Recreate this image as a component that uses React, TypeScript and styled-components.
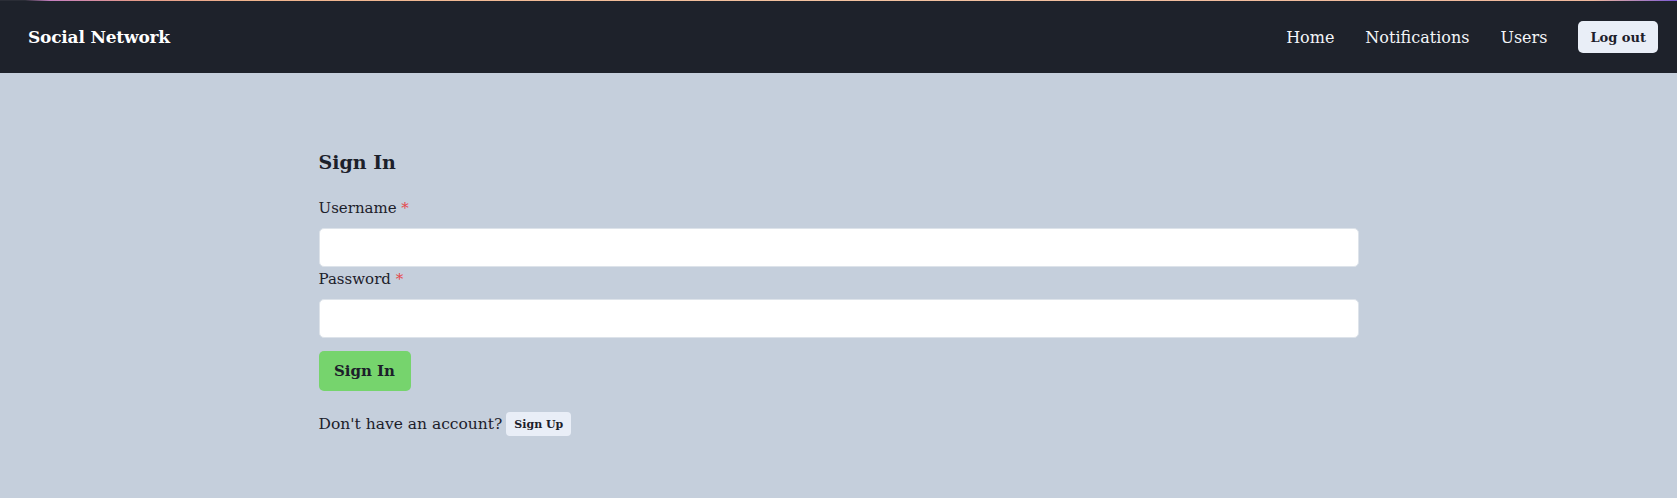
import React, { useState } from 'react'
import styled, { createGlobalStyle } from 'styled-components'

const GlobalStyle = createGlobalStyle`
	* {
		box-sizing: border-box;
	}
	html, body {
		margin: 0;
		padding: 0;
		background-color: #c5cfdc;
		font-family: 'DejaVu Serif', 'Liberation Serif', serif;
		color: #1c202a;
	}
`

const TopLine = styled.div`
	height: 1px;
	background: linear-gradient(
		to right,
		#2a2d36 0%,
		#2a2d36 1.5%,
		#c67fc0 3%,
		#e59a8a 8%,
		#f0b48d 15%,
		#f3c2a0 50%,
		#f0b89c 95%,
		#7b5ad6 100%
	);
`

const Nav = styled.nav`
	height: 72px;
	background-color: #1e222b;
	display: flex;
	align-items: center;
	justify-content: space-between;
	padding: 0 19px 0 28px;
`

const Brand = styled.h1`
	margin: 0;
	font-size: 17px;
	font-weight: bold;
	color: #ffffff;
	letter-spacing: -0.2px;
`

const NavLinks = styled.div`
	display: flex;
	align-items: center;
	gap: 31px;
`

const NavLink = styled.a`
	color: #f3f5f8;
	font-size: 16px;
	text-decoration: none;
	cursor: pointer;
`

const LightButton = styled.button<{ $small?: boolean }>`
	border: none;
	border-radius: ${p => (p.$small ? '4px' : '5px')};
	background-color: #e9eef7;
	color: #1c202a;
	font-family: inherit;
	font-weight: bold;
	font-size: ${p => (p.$small ? '11px' : '13px')};
	height: ${p => (p.$small ? '24px' : '32px')};
	padding: ${p => (p.$small ? '0 8px' : '0 12px')};
	cursor: pointer;
`

const Main = styled.main`
	width: 1040px;
	margin: 0 auto;
	padding-top: 76px;
	padding-bottom: 60px;
`

const Heading = styled.h2`
	margin: 0 0 21px;
	font-size: 19px;
	line-height: 26px;
	font-weight: bold;
`

const Form = styled.form`
	display: flex;
	flex-direction: column;
`

const Label = styled.label`
	display: block;
	font-size: 15px;
	line-height: 24px;
	margin-bottom: 8px;
`

const Required = styled.span`
	color: #e5484d;
`

const Input = styled.input`
	width: 100%;
	height: 39px;
	border: 1px solid #dde3ea;
	border-radius: 5px;
	background: #ffffff;
	padding: 0 10px;
	font-family: inherit;
	font-size: 15px;
	outline: none;
`

const Submit = styled.button.attrs({
	type: 'submit',
})`
	align-self: flex-start;
	margin-top: 13px;
	width: 92px;
	height: 40px;
	border: none;
	border-radius: 5px;
	background-color: #76d46d;
	color: #1c202a;
	font-family: inherit;
	font-weight: bold;
	font-size: 15px;
	cursor: pointer;
`

const Footer = styled.div`
	display: flex;
	align-items: center;
	gap: 4px;
	margin-top: 21px;
	font-size: 15.5px;
`

const App: React.FC = () => {
	const [inputs, setInputs] = useState({ username: '', password: '' })

	const submitHandler: React.FormEventHandler = event => {
		event.preventDefault()
	}

	return (
		<>
			<GlobalStyle />
			<TopLine />
			<Nav>
				<Brand>Social Network</Brand>
				<NavLinks>
					<NavLink>Home</NavLink>
					<NavLink>Notifications</NavLink>
					<NavLink>Users</NavLink>
					<LightButton>Log out</LightButton>
				</NavLinks>
			</Nav>
			<Main>
				<Heading>Sign In</Heading>
				<Form onSubmit={submitHandler}>
					<Label htmlFor="username">
						Username <Required>*</Required>
					</Label>
					<Input
						id="username"
						value={inputs.username}
						onChange={e => setInputs(prev => ({ ...prev, username: e.target.value }))}
					/>
					<Label htmlFor="password">
						Password <Required>*</Required>
					</Label>
					<Input
						id="password"
						type="password"
						value={inputs.password}
						onChange={e => setInputs(prev => ({ ...prev, password: e.target.value }))}
					/>
					<Submit>Sign In</Submit>
				</Form>
				<Footer>
					Don't have an account? <LightButton $small>Sign Up</LightButton>
				</Footer>
			</Main>
		</>
	)
}

export default App
